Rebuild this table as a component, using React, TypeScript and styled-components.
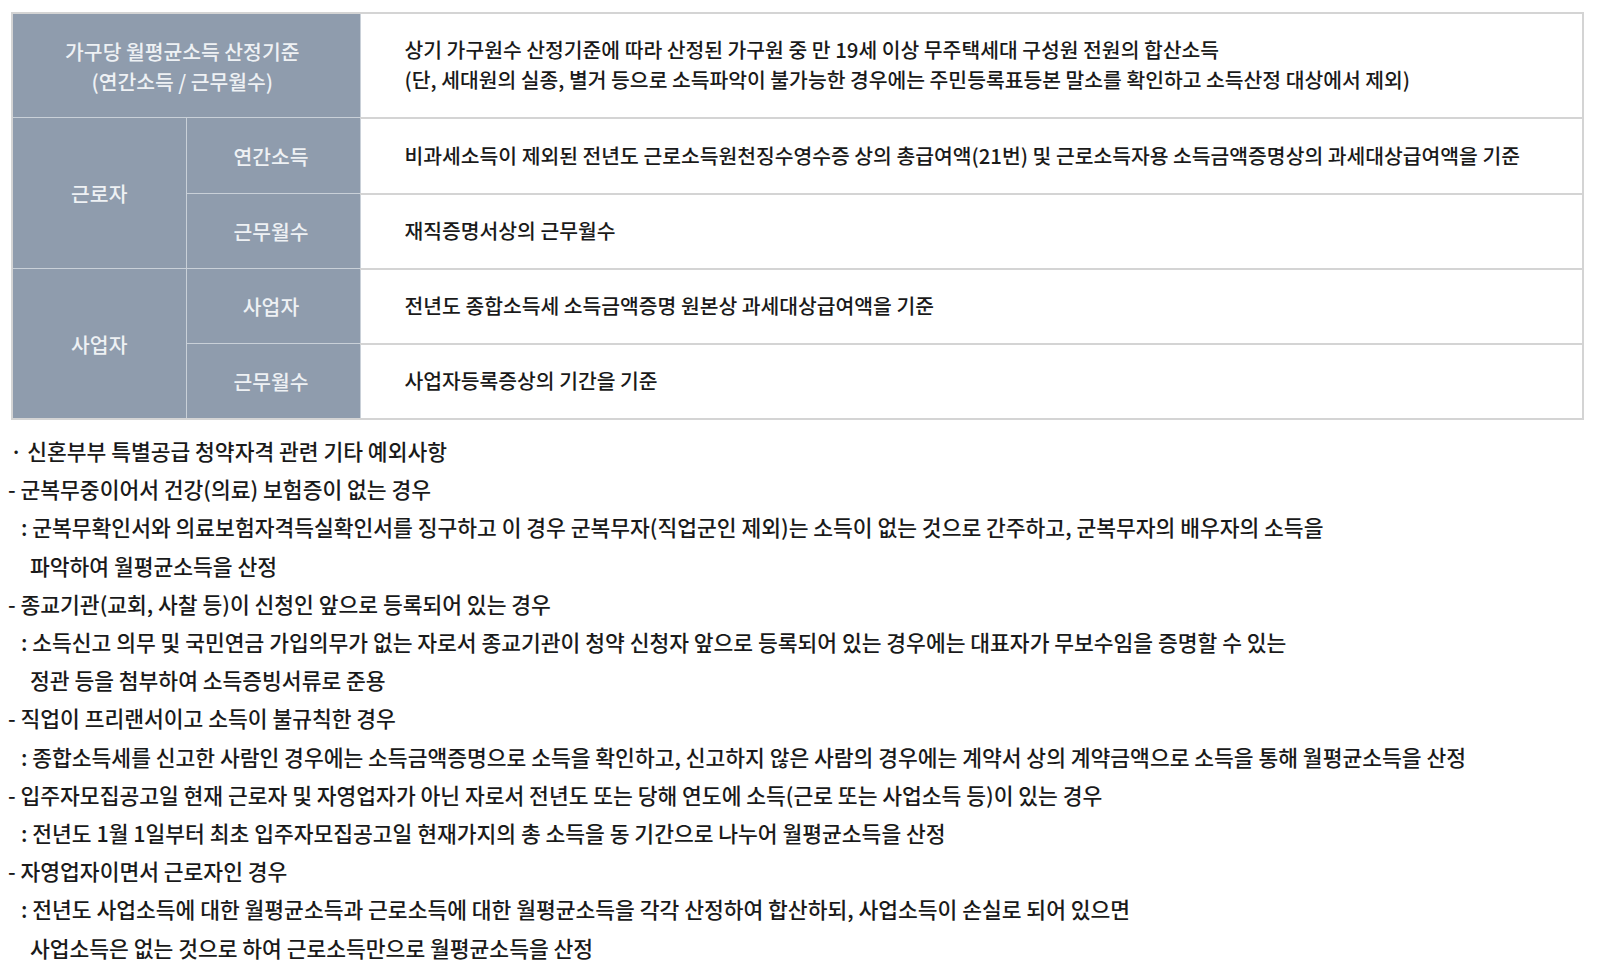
import React from "react";
import styled, { createGlobalStyle } from "styled-components";

const GlobalStyle = createGlobalStyle`
  html, body {
    margin: 0;
    padding: 0;
    background: #fff;
  }
  body {
    font-family: "Noto Sans CJK KR", "Noto Sans", sans-serif;
    font-weight: 500;
    color: #1a1a1a;
  }
`;

const Page = styled.div`
  padding-top: 12px;
`;

const Table = styled.table`
  width: calc(100% - 25px);
  margin-left: 11px;
  border-collapse: collapse;
  table-layout: fixed;
  border: 2px solid #d4d4d4;
  font-size: 20.4px;
`;

const Head = styled.th<{ $h: number; $shift?: number }>`
  height: ${(p) => p.$h}px;
  background: #8f9cad;
  color: #eef1f4;
  font-weight: 500;
  text-align: center;
  vertical-align: middle;
  line-height: 30px;
  border: 1px solid #c9d0d8;
  padding: 0 ${(p) => p.$shift ?? 0}px 0 0;
`;

const Cell = styled.td`
  padding: 0 0 2px 44px;
  vertical-align: middle;
  line-height: 30px;
  border-top: 2px solid #d4d4d4;
  color: #1a1a1a;
`;

const Notes = styled.div`
  padding-top: 12px;
  font-size: 21.5px;
  line-height: 38.2px;
  color: #1a1a1a;
`;

const Line = styled.div<{ $indent: number }>`
  padding-left: ${(p) => p.$indent}px;
  white-space: pre;
`;

const notes: [string, number][] = [
  ["· 신혼부부 특별공급 청약자격 관련 기타 예외사항", 10],
  ["- 군복무중이어서 건강(의료) 보험증이 없는 경우", 8],
  [": 군복무확인서와 의료보험자격득실확인서를 징구하고 이 경우 군복무자(직업군인 제외)는 소득이 없는 것으로 간주하고, 군복무자의 배우자의 소득을", 21],
  ["파악하여 월평균소득을 산정", 30],
  ["- 종교기관(교회, 사찰 등)이 신청인 앞으로 등록되어 있는 경우", 8],
  [": 소득신고 의무 및 국민연금 가입의무가 없는 자로서 종교기관이 청약 신청자 앞으로 등록되어 있는 경우에는 대표자가 무보수임을 증명할 수 있는", 21],
  ["정관 등을 첨부하여 소득증빙서류로 준용", 30],
  ["- 직업이 프리랜서이고 소득이 불규칙한 경우", 8],
  [": 종합소득세를 신고한 사람인 경우에는 소득금액증명으로 소득을 확인하고, 신고하지 않은 사람의 경우에는 계약서 상의 계약금액으로 소득을 통해 월평균소득을 산정", 21],
  ["- 입주자모집공고일 현재 근로자 및 자영업자가 아닌 자로서 전년도 또는 당해 연도에 소득(근로 또는 사업소득 등)이 있는 경우", 8],
  [": 전년도 1월 1일부터 최초 입주자모집공고일 현재가지의 총 소득을 동 기간으로 나누어 월평균소득을 산정", 21],
  ["- 자영업자이면서 근로자인 경우", 8],
  [": 전년도 사업소득에 대한 월평균소득과 근로소득에 대한 월평균소득을 각각 산정하여 합산하되, 사업소득이 손실로 되어 있으면", 21],
  ["사업소득은 없는 것으로 하여 근로소득만으로 월평균소득을 산정", 30],
];

export default function App() {
  return (
    <Page>
      <GlobalStyle />
      <Table>
        <colgroup>
          <col style={{ width: 174 }} />
          <col style={{ width: 174 }} />
          <col />
        </colgroup>
        <tbody>
          <tr>
            <Head $h={103} $shift={8} colSpan={2}>
              가구당 월평균소득 산정기준
              <br />
              (연간소득 / 근무월수)
            </Head>
            <Cell>
              상기 가구원수 산정기준에 따라 산정된 가구원 중 만 19세 이상 무주택세대 구성원 전원의 합산소득
              <br />
              (단, 세대원의 실종, 별거 등으로 소득파악이 불가능한 경우에는 주민등록표등본 말소를 확인하고 소득산정 대상에서 제외)
            </Cell>
          </tr>
          <tr>
            <Head $h={75} rowSpan={2}>근로자</Head>
            <Head $h={75} $shift={4}>연간소득</Head>
            <Cell>
              비과세소득이 제외된 전년도 근로소득원천징수영수증 상의 총급여액(21번) 및 근로소득자용 소득금액증명상의 과세대상급여액을 기준
            </Cell>
          </tr>
          <tr>
            <Head $h={74} $shift={4}>근무월수</Head>
            <Cell>재직증명서상의 근무월수</Cell>
          </tr>
          <tr>
            <Head $h={74} rowSpan={2}>사업자</Head>
            <Head $h={74} $shift={4}>사업자</Head>
            <Cell>전년도 종합소득세 소득금액증명 원본상 과세대상급여액을 기준</Cell>
          </tr>
          <tr>
            <Head $h={74} $shift={4}>근무월수</Head>
            <Cell>사업자등록증상의 기간을 기준</Cell>
          </tr>
        </tbody>
      </Table>
      <Notes>
        {notes.map(([text, indent], i) => (
          <Line key={i} $indent={indent}>
            {text}
          </Line>
        ))}
      </Notes>
    </Page>
  );
}
